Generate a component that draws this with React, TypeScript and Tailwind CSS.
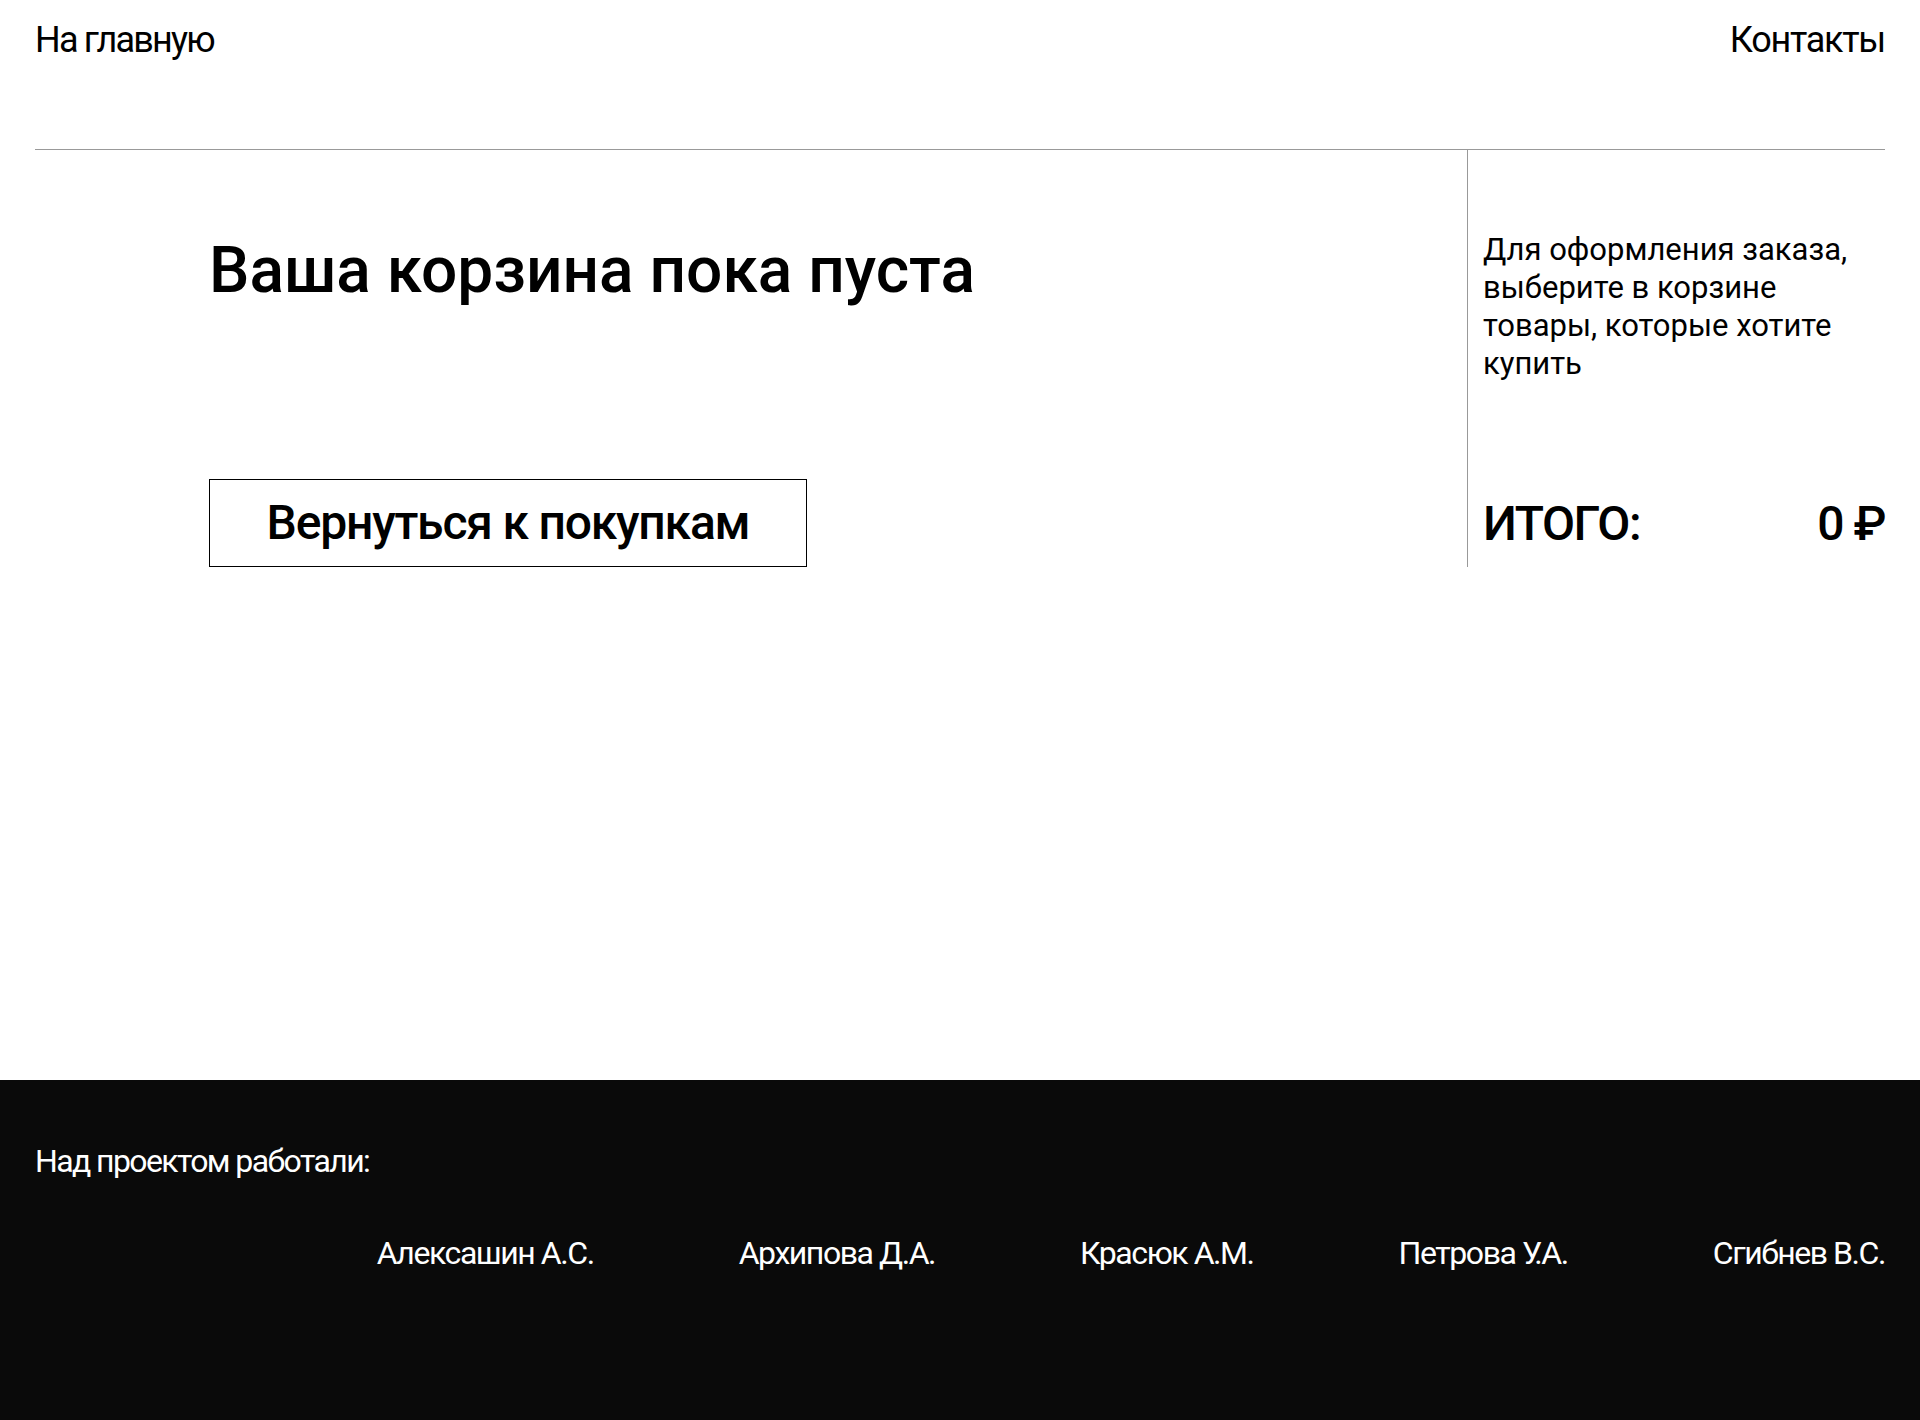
import React from "react";

const names = ["Алексашин А.С.", "Архипова Д.А.", "Красюк А.М.", "Петрова У.А.", "Сгибнев В.С."];

export default function App() {
  return (
    <div className="min-h-screen flex flex-col bg-white text-black" style={{ fontFamily: "Roboto, 'Liberation Sans', sans-serif" }}>
      <header className="h-[149px] px-[35px] pt-[19px] flex justify-between items-start">
        <a className="text-[36px] leading-[42px] tracking-[-0.05em]">На главную</a>
        <a className="text-[36px] leading-[42px] tracking-[-0.035em]">Контакты</a>
      </header>
      <main className="flex-1 px-[35px]">
        <div className="border-t border-[#999] flex">
          <div className="flex-1 pl-[174px] pt-[83px]">
            <h1 className="text-[64px] leading-[75px] font-medium">Ваша корзина пока пуста</h1>
            <button className="mt-[171px] w-[598px] h-[88px] border border-black flex items-center justify-center text-[48px] leading-[56px] font-medium tracking-[-0.025em]">
              Вернуться к покупкам
            </button>
          </div>
          <div className="w-[418px] border-l border-[#999] pl-[15px] pt-[81px] pb-[15px] flex flex-col">
            <p className="text-[31px] leading-[38px]">
              Для оформления заказа, выберите в корзине товары, которые хотите купить
            </p>
            <div className="mt-auto flex justify-between items-center text-[48px] leading-[56px] font-medium tracking-[-0.03em]">
              <span>ИТОГО:</span>
              <span>0 ₽</span>
            </div>
          </div>
        </div>
      </main>
      <footer className="h-[340px] bg-[#0a0a0a] text-white px-[35px] pt-[62px]">
        <p className="text-[32px] leading-[38px] tracking-[-0.05em]">Над проектом работали:</p>
        <div className="mt-[54px] flex justify-end gap-[145px]">
          {names.map((n) => (
            <span key={n} className="text-[32px] leading-[38px] tracking-[-0.045em]">{n}</span>
          ))}
        </div>
      </footer>
    </div>
  );
}
